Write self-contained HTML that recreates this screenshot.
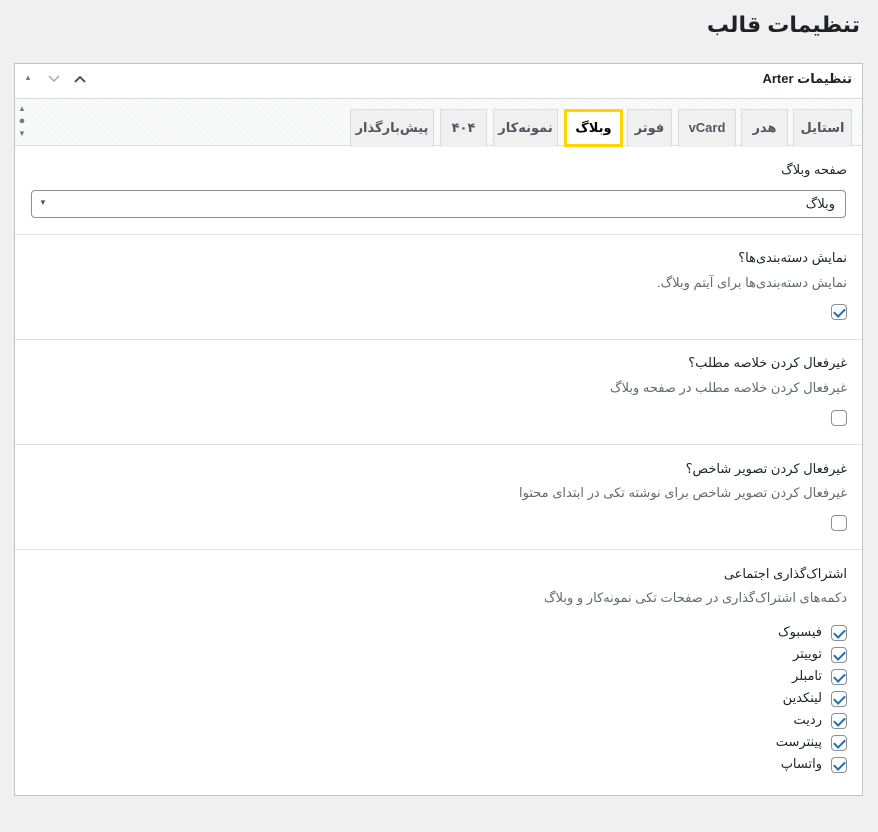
<!DOCTYPE html>
<html dir="rtl"><head><meta charset="utf-8"><style>
*{box-sizing:border-box;margin:0;padding:0}
body{width:878px;height:832px;background:#f0f0f1;font-family:"Liberation Sans","DejaVu Sans",sans-serif;color:#1d2327;font-size:13px;position:relative;overflow:hidden}
.a{position:absolute;white-space:nowrap}
.panel{position:absolute;left:14px;top:63px;width:849px;height:733px;background:#fff;border:1px solid #c3c4c7}
.tabbar{position:absolute;left:0;top:34px;width:847px;height:48px;border-top:1px solid #dcdcde;border-bottom:1px solid #dcdcde;background:repeating-linear-gradient(45deg,#f6f7f7 0 2px,#fbfbfb 2px 4px)}
.tab{position:absolute;top:10px;height:38px;background:#f0f0f1;border:1px solid #dcdcde;border-bottom:none;font-weight:bold;font-size:13px;color:#50575e;text-align:center;line-height:36px}
.tab.on{background:#fff;border:3px solid #ffd400;color:#000;line-height:32px}
.sep{position:absolute;left:0;width:847px;border-top:1px solid #e0e0e0}
.cb{position:absolute;width:16px;height:16px;border:1px solid #8c8f94;border-radius:4px;background:#fff}
.cb.c::after{content:"";position:absolute;left:4px;top:1px;width:5px;height:9px;border:solid #2271b1;border-width:0 2.5px 2.5px 0;transform:rotate(45deg)}
.d{color:#646970;font-size:13px}
</style></head><body>
<div class="a" style="right:18px;top:12px;font-size:22px;font-weight:bold">تنظیمات قالب</div>
<div class="panel">
 <div class="a" style="right:10px;top:7px;font-weight:bold;font-size:13px">تنظیمات Arter</div>
 <div class="a" style="left:9px;top:9px;font-size:8px;color:#787c82">▲</div>
 <svg class="a" style="left:32px;top:10px" width="14" height="10"><path d="M2 2L7 7L12 2" stroke="#a7aaad" stroke-width="1.5" fill="none"/></svg>
 <svg class="a" style="left:58px;top:10px" width="14" height="10"><path d="M2 8L7 3L12 8" stroke="#50575e" stroke-width="2" fill="none"/></svg>
 <div class="tabbar">
  <div class="a" style="left:3px;top:4px;font-size:8px;color:#787c82;line-height:12px;text-align:center">▲<br><span style="font-size:11px">●</span><br>▼</div>
  <div class="tab" style="left:778px;width:59px">استایل</div>
  <div class="tab" style="left:726px;width:47px">هدر</div>
  <div class="tab" style="left:663px;width:58px">vCard</div>
  <div class="tab" style="left:612px;width:45px">فوتر</div>
  <div class="tab on" style="left:549px;width:59px">وبلاگ</div>
  <div class="tab" style="left:478px;width:65px">نمونه‌کار</div>
  <div class="tab" style="left:425px;width:47px">۴۰۴</div>
  <div class="tab" style="left:335px;width:84px">پیش‌بارگذار</div>
 </div>
 <div class="a" style="right:15px;top:98px">صفحه وبلاگ</div>
 <div class="a" style="left:16px;top:126px;width:815px;height:28px;border:1px solid #8c8f94;border-radius:4px"><span class="a" style="right:10px;top:5px">وبلاگ</span><span class="a" style="left:7px;top:7px;font-size:8px;color:#50575e">▼</span></div>
 <div class="sep" style="top:170px"></div>
 <div class="a" style="right:15px;top:186px">نمایش دسته‌بندی‌ها؟</div>
 <div class="a d" style="right:15px;top:211px">نمایش دسته‌بندی‌ها برای آیتم وبلاگ.</div>
 <div class="cb c" style="right:15px;top:240px"></div>
 <div class="sep" style="top:275px"></div>
 <div class="a" style="right:15px;top:291px">غیرفعال کردن خلاصه مطلب؟</div>
 <div class="a d" style="right:15px;top:316px">غیرفعال کردن خلاصه مطلب در صفحه وبلاگ</div>
 <div class="cb" style="right:15px;top:346px"></div>
 <div class="sep" style="top:380px"></div>
 <div class="a" style="right:15px;top:397px">غیرفعال کردن تصویر شاخص؟</div>
 <div class="a d" style="right:15px;top:421px">غیرفعال کردن تصویر شاخص برای نوشته تکی در ابتدای محتوا</div>
 <div class="cb" style="right:15px;top:451px"></div>
 <div class="sep" style="top:485px"></div>
 <div class="a" style="right:15px;top:502px">اشتراک‌گذاری اجتماعی</div>
 <div class="a d" style="right:15px;top:526px">دکمه‌های اشتراک‌گذاری در صفحات تکی نمونه‌کار و وبلاگ</div>
 <div class="cb c" style="right:15px;top:561px"></div><div class="a" style="right:40px;top:560px">فیسبوک</div>
 <div class="cb c" style="right:15px;top:583px"></div><div class="a" style="right:40px;top:582px">توییتر</div>
 <div class="cb c" style="right:15px;top:605px"></div><div class="a" style="right:40px;top:604px">تامبلر</div>
 <div class="cb c" style="right:15px;top:627px"></div><div class="a" style="right:40px;top:626px">لینکدین</div>
 <div class="cb c" style="right:15px;top:649px"></div><div class="a" style="right:40px;top:648px">ردیت</div>
 <div class="cb c" style="right:15px;top:671px"></div><div class="a" style="right:40px;top:670px">پینترست</div>
 <div class="cb c" style="right:15px;top:693px"></div><div class="a" style="right:40px;top:692px">واتساپ</div>
</div>
</body></html>
